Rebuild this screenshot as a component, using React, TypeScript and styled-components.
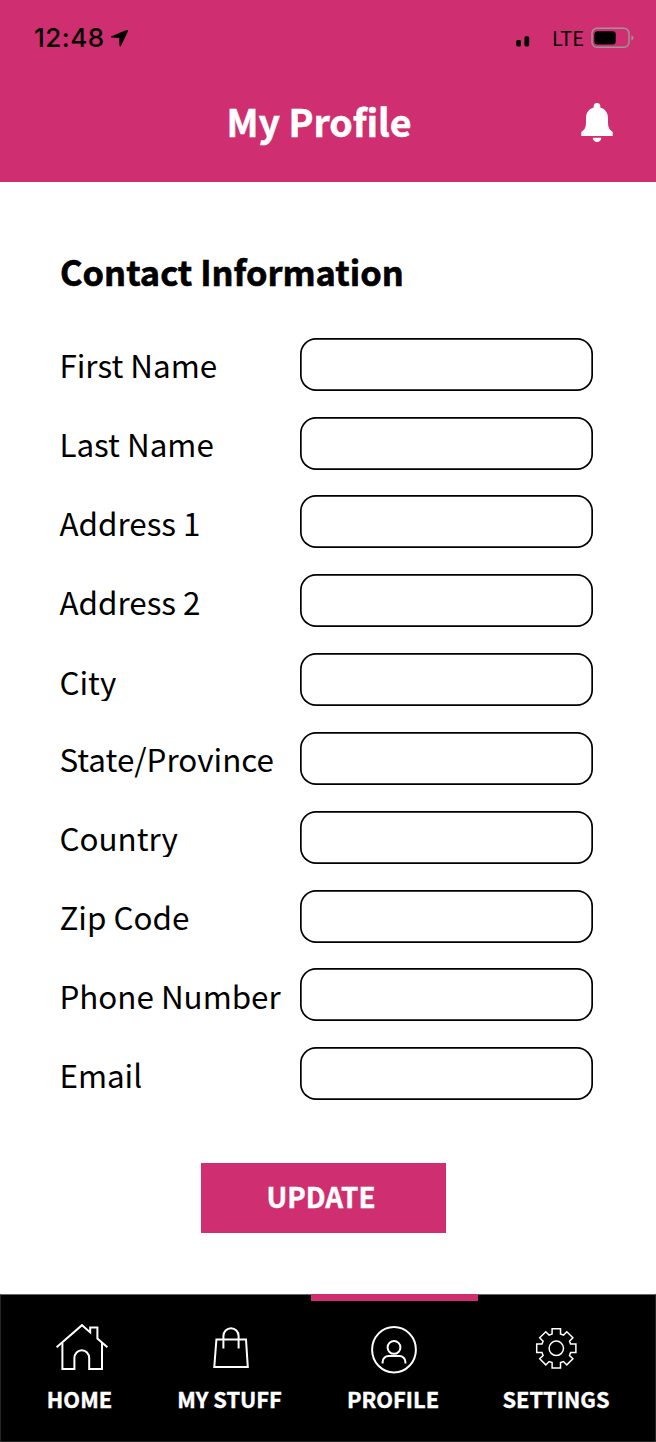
import React from "react";
import styled, { createGlobalStyle } from "styled-components";

const PINK = "#cf2e70";

const GlobalStyle = createGlobalStyle`
  *, *::before, *::after { box-sizing: border-box; }
  body {
    margin: 0;
    background: #fff;
    color: #000;
    font-family: "Noto Sans CJK SC", "Noto Sans", sans-serif;
  }
`;

const Screen = styled.div`
  width: 656px;
  height: 1442px;
  display: flex;
  flex-direction: column;
  overflow: hidden;
  background: #fff;
`;

const Header = styled.header`
  height: 182px;
  flex: none;
  background: ${PINK};
`;

const StatusBar = styled.div`
  height: 76px;
  padding: 0 22px 0 34px;
  display: flex;
  align-items: center;
`;

const Clock = styled.span`
  width: 76px;
  font: 500 26px/30px Inter, sans-serif;
  letter-spacing: 0.5px;
`;

const Carrier = styled.span`
  margin-left: 22px;
  width: 39px;
  font-size: 20px;
  line-height: 28px;
  margin-top: -1px;
`;

const SignalIcon = styled.svg`
  margin-left: auto;
  margin-top: 6px;
`;

const TitleBar = styled.div`
  height: 90px;
  display: grid;
  grid-template-columns: 1fr auto 1fr;
  align-items: center;
  padding: 0 43px 0 25px;
`;

const Title = styled.h1`
  grid-column: 2;
  margin: 0;
  color: #fff;
  font-size: 37.5px;
  font-weight: 700;
  line-height: 54px;
  -webkit-text-stroke: 0.5px currentColor;
`;

const BellIcon = styled.svg`
  justify-self: end;
  margin-top: 2px;
`;

const Content = styled.main`
  flex: 1;
  padding: 64px 63px 0 59px;
  display: flex;
  flex-direction: column;
`;

const SectionTitle = styled.h2`
  margin: 0 0 41.7px;
  padding-left: 1px;
  font-size: 34.4px;
  font-weight: 700;
  line-height: 50px;
  -webkit-text-stroke: 0.6px currentColor;
`;

const Form = styled.form`
  display: flex;
  flex-direction: column;
`;

const Fields = styled.div`
  display: flex;
  flex-direction: column;
  gap: 25.85px;
`;

const Field = styled.div`
  display: flex;
  height: 53px;
  justify-content: space-between;
`;

const Label = styled.label<{ $clipped?: boolean; $drop?: number }>`
  margin-top: ${(p) => (p.$drop ?? 0) + 0.3}px;
  padding-left: 0.4px;
  height: ${(p) => (p.$clipped ? "46px" : "53px")};
  overflow: ${(p) => (p.$clipped ? "hidden" : "visible")};
  font-size: 31.4px;
  line-height: 54px;
  white-space: nowrap;
`;

const Input = styled.input`
  width: 293px;
  height: 53px;
  padding: 0 16px;
  border: 0;
  border-radius: 16px;
  outline: none;
  background: #fff;
  box-shadow: inset 0 0 0 1.7px #000;
  font: inherit;
  font-size: 28px;
`;

const UpdateButton = styled.button`
  width: 245px;
  height: 70px;
  margin: 62.7px 0 0 142px;
  padding: 0 5px 3px 0;
  border: 0;
  background: ${PINK};
  color: #fff;
  font-family: inherit;
  font-size: 27.8px;
  font-weight: 700;
  line-height: 67px;
  -webkit-text-stroke: 0.4px currentColor;
`;

const Nav = styled.nav`
  flex: none;
  height: 148px;
  padding-left: 10px;
  display: grid;
  grid-template-columns: 137px 163px 167px 156px;
  background: #000;
  border: 1px solid #262626;
  border-top-color: #666;
`;

const NavItem = styled.a<{ $active?: boolean }>`
  margin-top: -1px;
  padding-right: ${(p) => (p.$active ? 3 : 0)}px;
  border-top: 7px solid ${(p) => (p.$active ? PINK : "transparent")};
  display: flex;
  flex-direction: column;
  align-items: center;
  color: #fff;
`;

const NavIcon = styled.svg<{ $shift?: number; $stroke?: number }>`
  height: 52px;
  margin-top: 21px;
  margin-left: ${(p) => p.$shift ?? 0}px;
  fill: none;
  stroke: currentColor;
  stroke-width: ${(p) => p.$stroke ?? 2};
`;

const NavLabel = styled.span`
  margin-top: 8px;
  font-size: 21.8px;
  font-weight: 700;
  line-height: 34px;
  white-space: nowrap;
  -webkit-text-stroke: 0.4px currentColor;
`;

const fields = [
  { id: "first", label: "First Name" },
  { id: "last", label: "Last Name" },
  { id: "address1", label: "Address 1" },
  { id: "address2", label: "Address 2" },
  { id: "city", label: "City", clipped: true, drop: 2 },
  { id: "state", label: "State/Province" },
  { id: "country", label: "Country", clipped: true },
  { id: "zip", label: "Zip Code" },
  { id: "phone", label: "Phone Number" },
  { id: "email", label: "Email" },
];

const HomeIcon = () => (
  <NavIcon $shift={5} width="54" viewBox="0 0 54 52">
    <path d="M1.600 25.200 27 3.200 35.200 10.400V5.600H42.400V16.600L52.400 25.200" />
    <path d="M7.400 21V47H19.400V36.200a7.400 8 0 0 1 14.800 0V47H47V21" />
  </NavIcon>
);

const BagIcon = () => (
  <NavIcon $shift={2} width="38" viewBox="0 0 38 52">
    <path d="M4.400 17.500H34L35.800 45H2.300Z" />
    <path d="M11.400 26.400V14a7.600 7.800 0 0 1 15.200 0V26.400" />
  </NavIcon>
);

const ProfileIcon = () => (
  <NavIcon $shift={1} width="48" viewBox="0 0 48 52">
    <ellipse cx="24" cy="27.7" rx="21.9" ry="22.7" />
    <circle cx="24" cy="25.4" r="6.4" />
    <path d="M12.600 41.400V40a6 6 0 0 1 6-6H29.400a6 6 0 0 1 6 6V41.400" />
  </NavIcon>
);

const GearIcon = () => (
  <NavIcon $stroke={1.5} width="42" viewBox="-21.3 -26.3 42 52">
    <path d="M-4.2-19.6H4.2V-14.3L7.2-13.2 10.5-16.6 16.6-10.5 13.2-7.2 14.3-4.2H19.6V4.2H14.3L13.2 7.2 16.6 10.5 10.5 16.6 7.2 13.2 4.2 14.3V19.6H-4.2V14.3L-7.2 13.2-10.5 16.6-16.6 10.5-13.2 7.2-14.3 4.2H-19.6V-4.2H-14.3L-13.2-7.2-16.6-10.5-10.5-16.6-7.2-13.2-4.2-14.3Z" />
    <circle r="7.2" />
  </NavIcon>
);

const navItems = [
  { label: "HOME", Icon: HomeIcon },
  { label: "MY STUFF", Icon: BagIcon },
  { label: "PROFILE", Icon: ProfileIcon, active: true },
  { label: "SETTINGS", Icon: GearIcon },
];

export default function App() {
  return (
    <>
      <GlobalStyle />
      <Screen>
        <Header>
          <StatusBar>
            <Clock>12:48</Clock>
            <svg width="19" height="19" viewBox="0 0 19 19">
              <path d="M16.6 1.1 1.4 7.2Q.5 8 1.6 8.5L9.2 8.9 9.5 16.7Q10 18 10.9 16.9L18 2.3Q18.2.6 16.6 1.1Z" />
            </svg>
            <SignalIcon width="15" height="12" viewBox="0 0 15 12">
              <rect x="1.2" y="5" width="4.8" height="6.4" rx="1.6" />
              <rect x="9.4" y="1.3" width="4.8" height="10.1" rx="1.6" />
            </SignalIcon>
            <Carrier>LTE</Carrier>
            <svg width="43" height="22" viewBox="0 0 43 22">
              <rect x="1" y="1.2" width="37" height="19" rx="5" fill="none" stroke="#999" strokeWidth="1.5" />
              <rect x="3.3" y="4.2" width="21.4" height="13.2" rx="3" />
              <path d="M40.4 8.2q2 .5 2 2.6t-2 2.6z" fill="#999" />
            </svg>
          </StatusBar>
          <TitleBar>
            <Title>My Profile</Title>
            <BellIcon width="32" height="40" viewBox="0 0 32 40" fill="#fff">
              <path d="M16 1a3.3 3.3 0 0 1 3.3 3.500v.9C24.500 6.900 27 11 27 16V21C27 25.500 28.500 28 31.700 29.900V34H.3V29.900C3.500 28 5 25.500 5 21V16C5 11 7.500 6.900 12.700 5.400V4.500A3.300 3.300 0 0 1 16 1Z" />
              <path d="M11.800 35.700H20.300a4.250 4.300 0 0 1-8.500 0Z" />
            </BellIcon>
          </TitleBar>
        </Header>
        <Content>
          <SectionTitle>Contact Information</SectionTitle>
          <Form onSubmit={(e) => e.preventDefault()}>
            <Fields>
              {fields.map((f) => (
                <Field key={f.id}>
                  <Label htmlFor={f.id} $clipped={f.clipped} $drop={f.drop}>
                    {f.label}
                  </Label>
                  <Input id={f.id} />
                </Field>
              ))}
            </Fields>
            <UpdateButton type="submit">UPDATE</UpdateButton>
          </Form>
        </Content>
        <Nav>
          {navItems.map(({ label, Icon, active }) => (
            <NavItem key={label} $active={active}>
              <Icon />
              <NavLabel>{label}</NavLabel>
            </NavItem>
          ))}
        </Nav>
      </Screen>
    </>
  );
}
